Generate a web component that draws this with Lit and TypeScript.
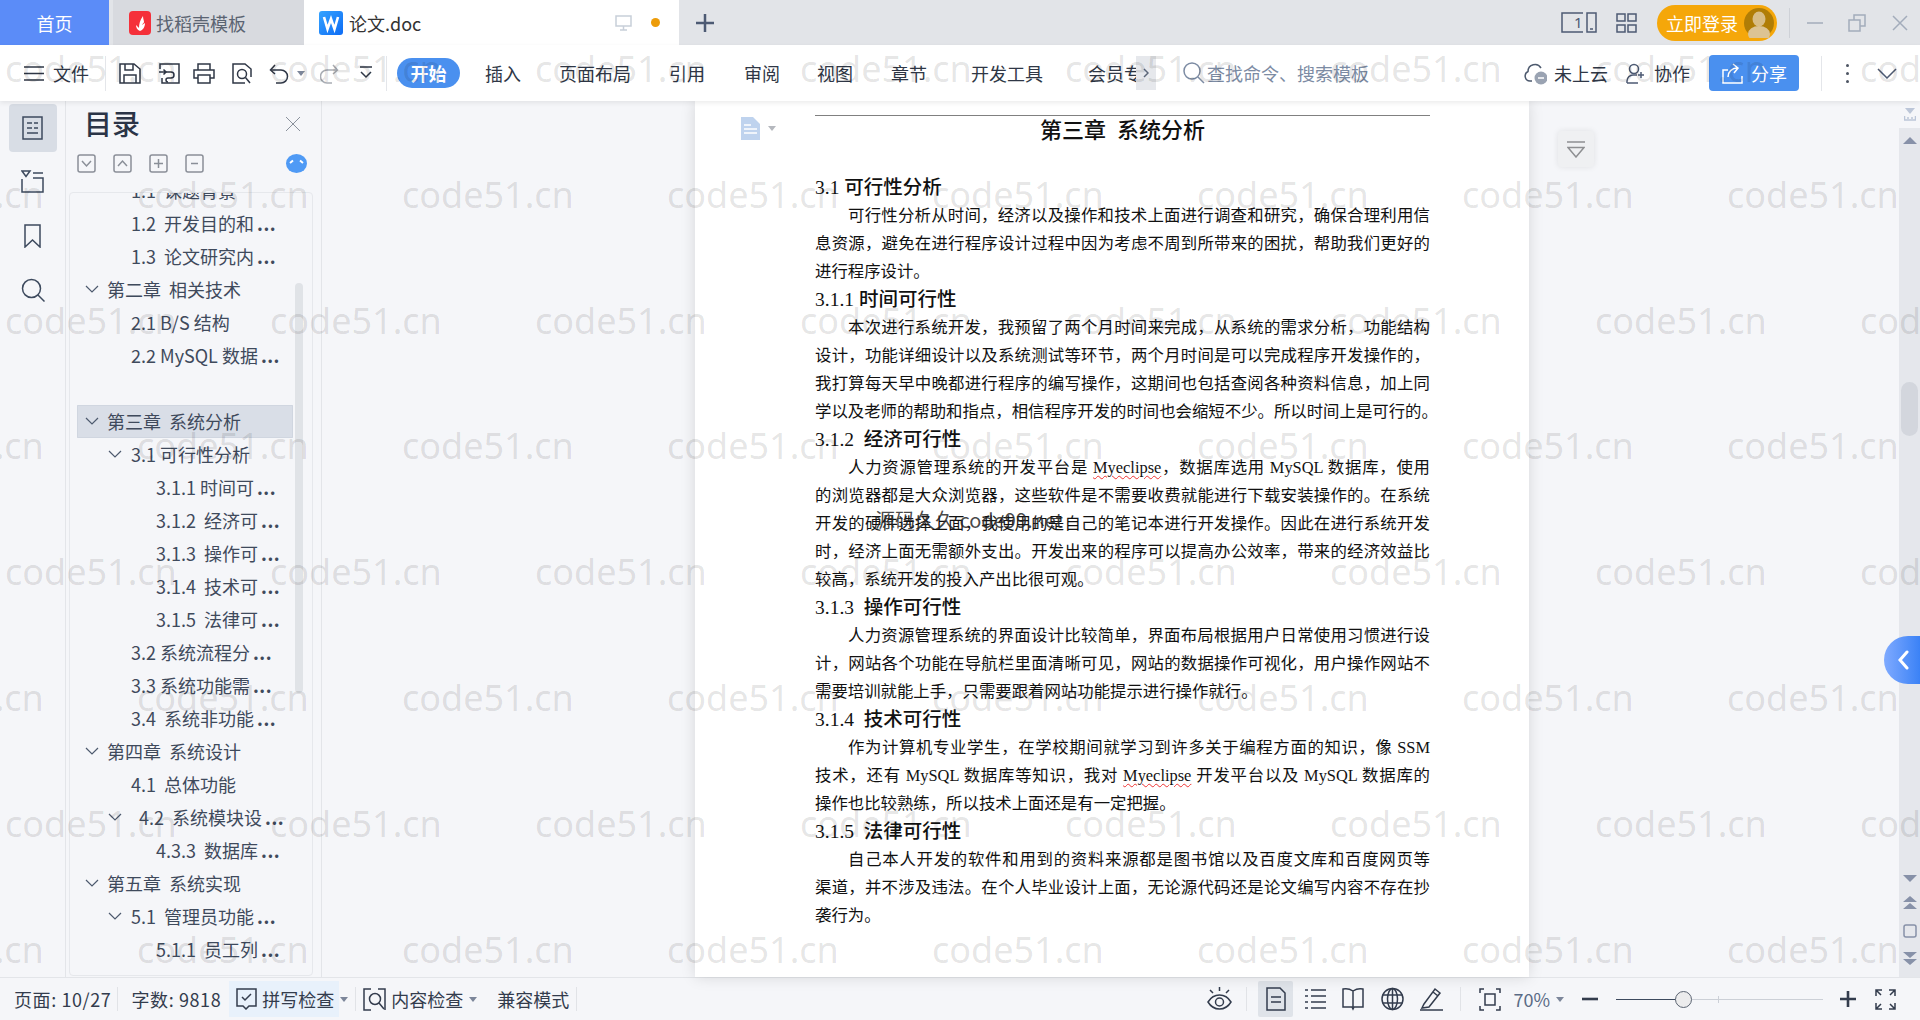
import { LitElement, html, css, svg, unsafeCSS, TemplateResult } from "lit";
import { customElement } from "lit/decorators.js";

const margins = Array.from({ length: 60 }, (_, i) => `.ml${i + 1}{margin-left:${i + 1}px}`).join("");

const ic = (w: number, h: number, cls: string, body: TemplateResult) =>
  html`<svg class="${cls}" width="${w}" height="${h}" viewBox="0 0 ${w} ${h}">${body}</svg>`;

const tri = (cls = "") => ic(8, 5, `tri ${cls}`, svg`<path d="M0 0h8L4 5z"/>`);

const chevron = ic(14, 8, "chev", svg`<path d="M1 1l6 6 6-6"/>`);

type Row = { t: string; lv: number; chev?: boolean; sel?: boolean; dots?: boolean; shift?: boolean };
const rows: Row[] = [
  { t: "1.1  课题背景", lv: 2 },
  { t: "1.2  开发目的和", lv: 2, dots: true },
  { t: "1.3  论文研究内", lv: 2, dots: true },
  { t: "第二章  相关技术", lv: 1, chev: true },
  { t: "2.1 B/S 结构", lv: 2 },
  { t: "2.2 MySQL 数据", lv: 2, dots: true },
  { t: "", lv: 2 },
  { t: "第三章  系统分析", lv: 1, chev: true, sel: true },
  { t: "3.1 可行性分析", lv: 2, chev: true },
  { t: "3.1.1 时间可", lv: 3, dots: true },
  { t: "3.1.2  经济可", lv: 3, dots: true },
  { t: "3.1.3  操作可", lv: 3, dots: true },
  { t: "3.1.4  技术可", lv: 3, dots: true },
  { t: "3.1.5  法律可", lv: 3, dots: true },
  { t: "3.2 系统流程分", lv: 2, dots: true },
  { t: "3.3 系统功能需", lv: 2, dots: true },
  { t: "3.4  系统非功能", lv: 2, dots: true },
  { t: "第四章  系统设计", lv: 1, chev: true },
  { t: "4.1  总体功能", lv: 2 },
  { t: "4.2  系统模块设", lv: 2, chev: true, dots: true, shift: true },
  { t: "4.3.3  数据库", lv: 3, dots: true },
  { t: "第五章  系统实现", lv: 1, chev: true },
  { t: "5.1  管理员功能", lv: 2, chev: true, dots: true },
  { t: "5.1.1  员工列", lv: 3, dots: true },
];

const tabs = [
  ["插入", "ml25"],
  ["页面布局", "ml38"],
  ["引用", "ml38"],
  ["审阅", "ml39"],
  ["视图", "ml37"],
  ["章节", "ml38"],
  ["开发工具", "ml44"],
];

const my = html`<span class="wavy">Myeclipse</span>`;
type Line = { k: "h" | "j" | "ji" | "e"; c: unknown };
const lines: Line[] = [
  { k: "h", c: "3.1 可行性分析" },
  { k: "ji", c: "可行性分析从时间，经济以及操作和技术上面进行调查和研究，确保合理利用信" },
  { k: "j", c: "息资源，避免在进行程序设计过程中因为考虑不周到所带来的困扰，帮助我们更好的" },
  { k: "e", c: "进行程序设计。" },
  { k: "h", c: "3.1.1 时间可行性" },
  { k: "ji", c: "本次进行系统开发，我预留了两个月时间来完成，从系统的需求分析，功能结构" },
  { k: "j", c: "设计，功能详细设计以及系统测试等环节，两个月时间是可以完成程序开发操作的，" },
  { k: "j", c: "我打算每天早中晚都进行程序的编写操作，这期间也包括查阅各种资料信息，加上同" },
  { k: "j", c: "学以及老师的帮助和指点，相信程序开发的时间也会缩短不少。所以时间上是可行的。" },
  { k: "h", c: "3.1.2  经济可行性" },
  { k: "ji", c: html`人力资源管理系统的开发平台是 ${my}，数据库选用 MySQL 数据库，使用` },
  { k: "j", c: "的浏览器都是大众浏览器，这些软件是不需要收费就能进行下载安装操作的。在系统" },
  { k: "j", c: "开发的硬件选择上面，我使用的是自己的笔记本进行开发操作。因此在进行系统开发" },
  { k: "j", c: "时，经济上面无需额外支出。开发出来的程序可以提高办公效率，带来的经济效益比" },
  { k: "e", c: "较高，系统开发的投入产出比很可观。" },
  { k: "h", c: "3.1.3  操作可行性" },
  { k: "ji", c: "人力资源管理系统的界面设计比较简单，界面布局根据用户日常使用习惯进行设" },
  { k: "j", c: "计，网站各个功能在导航栏里面清晰可见，网站的数据操作可视化，用户操作网站不" },
  { k: "e", c: "需要培训就能上手，只需要跟着网站功能提示进行操作就行。" },
  { k: "h", c: "3.1.4  技术可行性" },
  { k: "ji", c: "作为计算机专业学生，在学校期间就学习到许多关于编程方面的知识，像 SSM" },
  { k: "j", c: html`技术，还有 MySQL 数据库等知识，我对 ${my} 开发平台以及 MySQL 数据库的` },
  { k: "e", c: "操作也比较熟练，所以技术上面还是有一定把握。" },
  { k: "h", c: "3.1.5  法律可行性" },
  { k: "ji", c: "自己本人开发的软件和用到的资料来源都是图书馆以及百度文库和百度网页等" },
  { k: "j", c: "渠道，并不涉及违法。在个人毕业设计上面，无论源代码还是论文编写内容不存在抄" },
  { k: "e", c: "袭行为。" },
];

const WM_ROWS = [0, 1, 2, 3, 4, 5, 6, 7];
const WM_COLS = [-1, 0, 1, 2, 3, 4, 5, 6, 7];

@customElement("app-root")
export class AppRoot extends LitElement {
  static styles = css`
    ${unsafeCSS(margins)}
    :host {
      display: block;
      position: relative;
      width: 1920px;
      height: 1020px;
      overflow: hidden;
      font-family: "Noto Sans CJK SC", "Noto Sans", sans-serif;
      font-size: 18px;
      color: #2f3746;
      background: #f5f6f9;
    }
    svg { display: block; flex: none; fill: none; stroke: currentColor; stroke-width: 1.5; }
    svg.tri { fill: currentColor; stroke: none; color: #7c869a; }
    .app { display: flex; flex-direction: column; height: 1020px; }
    .t { white-space: pre; line-height: 24px; flex: none; }

    /* Tab strip */
    .tabbar { display: flex; align-items: center; height: 45px; background: #e2e4e8; flex: none; }
    .tab { display: flex; align-items: center; height: 45px; flex: none; }
    .home { width: 109px; justify-content: center; background: #5b8cf8; color: #fff; }
    .tmpl { width: 191px; margin-left: 4px; padding-left: 16px; box-sizing: border-box; background: #d8dadf; color: #5b6472; }
    .doc { width: 375px; padding-left: 15px; box-sizing: border-box; background: #fff; color: #333; }
    .mon { color: #c8cfd9; margin-left: 194px; }
    .dot { width: 9px; height: 9px; border-radius: 50%; background: #ed9c0a; margin-left: 19px; flex: none; }
    .plus { color: #4d5a73; stroke-width: 2.5; margin-left: 17px; }
    .spacer { flex: 1; }
    .slate { color: #4d5a73; }
    .login { display: flex; align-items: center; width: 120px; height: 36px; margin-left: 20px; border-radius: 18px; background: #f5a70a; color: #fff; box-sizing: border-box; padding-left: 9px; flex: none; }
    .vr { width: 1px; background: #ced1d7; flex: none; }
    .vr.tall { height: 30px; }
    .vr.tool { height: 35px; background: #e4e6ea; }
    .vr.stat { height: 24px; background: #e1e3e7; }
    .wc { color: #a3acbb; }

    /* Ribbon */
    .toolbar { display: flex; align-items: center; height: 56px; padding: 0 23px 0 24px; background: #fff; box-shadow: 0 2px 5px rgba(0, 0, 0, .08); position: relative; z-index: 2; flex: none; }
    .gray { color: #a9adb4; }
    .pill { width: 63px; height: 30px; line-height: 30px; text-align: center; border-radius: 15px; background: #4a90ef; color: #fff; font-weight: 700; flex: none; }
    .clip { width: 48px; overflow: hidden; flex: none; }
    .more { width: 20px; height: 34px; background: #e6e8ec; display: flex; align-items: center; justify-content: center; flex: none; }
    .more svg { color: #5c6678; }
    .sicon { color: #7c8ba3; }
    .search { color: #7c8ba3; }
    .share { display: flex; align-items: center; width: 90px; height: 36px; border-radius: 4px; background: #4a90ef; color: #fff; flex: none; padding-left: 13px; box-sizing: border-box; }
    .kebab { display: flex; flex-direction: column; gap: 5px; flex: none; }
    .kebab i { display: block; width: 3px; height: 3px; background: #4d5563; border-radius: 50%; }

    /* Body */
    .main { display: flex; flex: 1; min-height: 0; position: relative; }
    .rail { width: 66px; border-right: 1px solid #e3e5e9; box-sizing: border-box; display: flex; flex-direction: column; align-items: center; padding-top: 3px; color: #3d4a5e; flex: none; }
    .rail-on { width: 48px; height: 48px; border-radius: 4px; background: #d8dde5; display: flex; align-items: center; justify-content: center; }
    .r2 { margin-top: 18px; }
    .r3 { margin-top: 31px; }
    .r4 { margin-top: 30px; }
    .panel { width: 256px; border-right: 1px solid #e3e5e9; box-sizing: border-box; display: flex; flex-direction: column; flex: none; }
    .phead { display: flex; align-items: center; height: 44px; padding-left: 18px; flex: none; }
    .ptitle { font-size: 28px; line-height: 40px; font-weight: 500; color: #2b3447; }
    .pclose { color: #8a919c; stroke-width: 1; margin-left: auto; margin-right: 21px; margin-top: 2px; }
    .pbtns { display: flex; align-items: center; height: 19px; margin-top: 9px; padding-left: 11px; gap: 17px; flex: none; color: #8a8f98; }
    .pbtns .face { margin-left: 65px; }
    .tree { position: relative; margin: 19px 0 1px 3px; width: 244px; flex: 1; min-height: 0; box-sizing: border-box; border: 1px solid #e6e8ec; border-radius: 4px; overflow: hidden; color: #3f4a5c; }
    .rows { margin-top: -19.4px; }
    .row { display: flex; align-items: center; height: 33px; box-sizing: border-box; }
    .row .chev { color: #4d5a6e; stroke-width: 1.2; flex: none; }
    .lv1 { padding-left: 15px; }
    .lv1 .chev { margin-right: 8px; }
    .lv2 { padding-left: 61px; }
    .lv2.wc2 { padding-left: 38px; }
    .lv2.wc2 .chev { margin-right: 9px; }
    .lv2.shift .chev { margin-right: 17px; }
    .lv3 { padding-left: 86px; }
    .row.sel { background: #d9dee7; box-shadow: inset 0 0 0 1px #d0d6e0; width: 216px; margin-left: 7px; padding-left: 0; border-radius: 1px; }
    .row.sel .chev { margin-left: 8px; }
    .dots { font-weight: 700; margin-left: 3px; letter-spacing: .5px; }
    .pscroll { position: absolute; left: 225px; top: 90px; width: 8px; height: 410px; border-radius: 4px; background: #e0e3e7; }

    /* Workspace */
    .work { position: relative; flex: 1; min-width: 0; }
    .page { position: relative; margin-left: 373px; width: 834px; height: 100%; box-sizing: border-box; padding: 14px 99px 0 120px; background: #fff; box-shadow: 0 0 14px rgba(0, 0, 0, .13); color: #111; font-family: "Liberation Serif", "Noto Sans CJK SC", serif; }
    .rule { height: 1px; background: #808080; }
    .title { height: 30px; line-height: 30px; text-align: center; font-size: 22px; font-weight: 500; white-space: pre; margin-bottom: 28px; }
    .ln { height: 28px; line-height: 28px; white-space: nowrap; font-size: 16.4px; }
    .ln.h { font-size: 19.5px; font-weight: 500; white-space: pre; }
    .ln.j, .ln.ji { text-align: justify; text-align-last: justify; }
    .ln.ji { padding-left: 33px; }
    .wavy { text-decoration: underline wavy #e33 1px; text-underline-offset: 2px; }
    .pageic { position: absolute; left: 46px; top: 16px; display: flex; align-items: center; gap: 8px; }
    .pageic .tri { color: #b5b8be; }
    .stamp { position: absolute; left: 180px; top: 406px; font-size: 20px; line-height: 26px; color: rgba(40, 40, 40, .85); white-space: pre; font-family: "Noto Sans CJK SC", sans-serif; }
    .filter { position: absolute; left: 1236px; top: 30px; width: 36px; height: 36px; border-radius: 4px; background: #eff0f2; box-shadow: 0 0 6px rgba(0, 0, 0, .09); display: flex; align-items: center; justify-content: center; color: #8e8f92; }
    .vscroll { width: 21px; display: flex; flex-direction: column; align-items: center; flex: none; }
    .vtop { height: 27px; display: flex; align-items: center; justify-content: center; color: #bcc6d8; flex: none; }
    .track { flex: 1; width: 100%; background: #e5e7ec; display: flex; flex-direction: column; align-items: center; color: #8791a8; padding: 9px 0 11px; box-sizing: border-box; }
    .track svg.tri { color: #8791a8; }
    .thumb { width: 17px; height: 54px; border-radius: 9px; background: #d3d6dd; margin-top: 238px; }
    .vbtns { margin-top: auto; display: flex; flex-direction: column; align-items: center; gap: 14px; }
    .blue { position: absolute; right: 0; top: 535px; width: 36px; height: 48px; border-radius: 24px 0 0 24px; background: linear-gradient(90deg, #7faaff, #3b82f6); display: flex; align-items: center; justify-content: center; color: #fff; padding-left: 2px; box-sizing: border-box; }

    /* Status bar */
    .status { display: flex; align-items: center; height: 43px; border-top: 1px solid #e3e5e9; box-sizing: border-box; padding-left: 14px; flex: none; background: #f5f6f9; color: #333c4d; }
    .num { letter-spacing: .6px; }
    .spell { display: flex; align-items: center; width: 110px; height: 36px; padding-left: 7px; box-sizing: border-box; background: #e8f1fb; flex: none; }
    .pageview { display: flex; align-items: center; justify-content: center; width: 35px; height: 36px; background: #dfe3e9; border-radius: 2px; flex: none; }
    .zoomv { color: #5a6b85; }
    .slider { position: relative; width: 207px; height: 1px; background: #ccd0d7; flex: none; }
    .slider .fill { position: absolute; left: 0; top: 0; width: 60px; height: 1px; background: #3d4a5e; }
    .slider .tick { position: absolute; left: 102px; top: -3px; width: 1px; height: 7px; background: #ccd0d7; }
    .slider .knob { position: absolute; left: 59px; top: -8px; width: 17px; height: 17px; border-radius: 50%; border: 1.5px solid #5b6472; background: #ececed; box-sizing: border-box; }
    .thick { stroke-width: 2.6; }

    /* Watermark */
    .wm { position: absolute; inset: 0; overflow: hidden; pointer-events: none; z-index: 5; }
    .wm span { position: absolute; font-family: "Noto Sans", sans-serif; font-size: 36px; line-height: 50px; color: rgba(0, 0, 0, .115); white-space: pre; }
  `;

  private renderRow(r: Row) {
    const cls = [`row`, `lv${r.lv}`, r.chev ? "wc2" : "", r.sel ? "sel" : "", r.shift ? "shift" : ""].join(" ");
    return html`<div class="${cls}">
      ${r.chev ? chevron : ""}
      <span class="t">${r.t}</span>${r.dots ? html`<span class="dots">...</span>` : ""}
    </div>`;
  }

  render() {
    return html`<div class="app">
      <header class="tabbar">
        <div class="tab home">首页</div>
        <div class="tab tmpl">
          ${ic(22, 24, "", svg`<rect width="22" height="24" rx="4" fill="#f5303a" stroke="none"/><path d="M11 20c-3-1-4-4-4-6 1 1 2 2 3 3 0-4 1-8 4-12 0 3 1 4 1 6 0 1-1 1-2 3l3-2c0 4-2 7-5 8z" fill="#fff" stroke="none"/>`)}
          <span class="t ml5">找稻壳模板</span>
        </div>
        <div class="tab doc">
          ${ic(24, 24, "", svg`<defs><linearGradient id="w" x1="0" y1="0" x2="1" y2="1"><stop offset="0" stop-color="#36a4ff"/><stop offset="1" stop-color="#0d6cf5"/></linearGradient></defs><rect width="24" height="24" rx="3" fill="url(#w)" stroke="none"/><path d="M5 6l3.5 12L12 8l3.5 10L19 6" stroke="#fff" stroke-width="2.6"/>`)}
          <span class="t ml6">论文.doc</span>
          ${ic(17, 16, "mon", svg`<path d="M1 1h15v10H1zM8.5 11v4M5 15h7"/>`)}
          <span class="dot"></span>
        </div>
        ${ic(18, 18, "plus", svg`<path d="M9 0v18M0 9h18"/>`)}
        <div class="spacer"></div>
        ${ic(36, 21, "slate", svg`<path d="M22 1H1v19h21"/><rect x="26" y="1" width="9" height="19"/><path d="M29 17h3"/><text x="13" y="16" font-size="15" fill="currentColor" stroke="none" font-family="Noto Sans, sans-serif">1</text>`)}
        ${ic(21, 20, "slate ml19", svg`<rect x="1" y="1" width="8" height="7"/><rect x="12" y="1" width="8" height="7"/><rect x="1" y="12" width="8" height="7"/><rect x="12" y="12" width="8" height="7"/>`)}
        <div class="login">
          <span class="t">立即登录</span>
          ${ic(30, 30, "ml6", svg`<circle cx="15" cy="15" r="15" fill="#b07d06" stroke="none"/><ellipse cx="15" cy="11" rx="6.5" ry="7.5" fill="#d8bd86" stroke="none"/><ellipse cx="15" cy="26" rx="11" ry="8" fill="#dcc393" stroke="none"/>`)}
        </div>
        <div class="vr tall ml12"></div>
        ${ic(16, 2, "wc ml17", svg`<path d="M0 1h16"/>`)}
        ${ic(18, 18, "wc ml25", svg`<path d="M1 6h11v11H1zM6 6V1h11v11h-5"/>`)}
        ${ic(16, 16, "wc ml26", svg`<path d="M1 1l14 14M15 1L1 15"/>`)}
        <div class="ml12"></div>
      </header>

      <nav class="toolbar">
        ${ic(20, 15, "", svg`<path d="M0 1h20M0 7.5h20M0 14h20"/>`)}
        <span class="t ml9">文件</span>
        <div class="vr tool ml16"></div>
        ${ic(22, 21, "ml13", svg`<path d="M1 1h14l6 5v14H1z"/><path d="M6 1v6h8V1"/><path d="M5 20v-8h12v8"/>`)}
        ${ic(21, 21, "ml18", svg`<path d="M1 6V1h19v19H3v-5"/><path d="M0 9h7M4.5 6.5L7 9l-2.5 2.5"/><path d="M7 9h5a3 3 0 0 1 0 6h-3a2 2 0 0 0 0 4"/>`)}
        ${ic(22, 21, "ml13", svg`<path d="M5 7V1h12v6"/><path d="M5 15H1V7h20v8h-4"/><path d="M5 12h12v8H5z"/>`)}
        ${ic(20, 21, "ml17", svg`<path d="M13 20H1V1h12l6 5v8"/><circle cx="10" cy="11" r="4.5"/><path d="M13.5 14.5L18 20"/>`)}
        ${ic(20, 21, "ml17", svg`<path d="M6 2L1.5 7 6 11"/><path d="M2 7h10a6.5 6.5 0 0 1 0 13H7"/>`)}
        ${tri("ml8")}
        ${ic(19, 21, "ml15 gray", svg`<path d="M13 2l4.5 5L13 11"/><path d="M17 7H7a6.5 6.5 0 0 0 0 13h5"/>`)}
        ${ic(14, 14, "ml20", svg`<path d="M1 1h12M2 6l5 5 5-5"/>`)}
        <div class="vr tool ml13"></div>
        <div class="pill ml10">开始</div>
        ${tabs.map(([t, m]) => html`<span class="t ${m}">${t}</span>`)}
        <span class="t clip ml45">会员专享</span>
        <div class="more">${ic(6, 10, "", svg`<path d="M1 1l4 4-4 4"/>`)}</div>
        ${ic(22, 22, "sicon ml27", svg`<circle cx="9" cy="9" r="8"/><path d="M15 15l6 6"/>`)}
        <span class="t search ml2">查找命令、搜索模板</span>
        <div class="spacer"></div>
        ${ic(23, 24, "slate", svg`<path d="M8 20H6A5 5 0 0 1 4 10.500 7 7 0 0 1 17 7" stroke="#4d5a6e"/><circle cx="17" cy="17" r="6.500" fill="#9aa3b2" stroke="none"/><path d="M14 17h6" stroke="#fff"/>`)}
        <span class="t ml7">未上云</span>
        ${ic(19, 21, "slate ml18", svg`<circle cx="8" cy="6" r="4.500"/><path d="M1 20v-2a6 6 0 0 1 6-6h4M1 20h11M15 9v6M12 12h6"/>`)}
        <span class="t ml9">协作</span>
        <div class="share ml19">
          ${ic(21, 21, "", svg`<path d="M6 7H1v13h19v-7"/><path d="M6 14c0-5 4-9 9-9M11 1l5 4-4 5"/>`)}
          <span class="t ml8">分享</span>
        </div>
        <div class="vr tool ml22"></div>
        <div class="kebab ml24"><i></i><i></i><i></i></div>
        ${ic(20, 11, "slate ml28", svg`<path d="M1 1l9 9 9-9"/>`)}
      </nav>

      <div class="main">
        <aside class="rail">
          <div class="rail-on">
            ${ic(21, 24, "", svg`<path d="M1 1h19v22H1zM5 7h5M12 7h4M5 12h5M12 12h4M5 17h11"/>`)}
          </div>
          ${ic(23, 23, "r2", svg`<path d="M1 1h8L5 6.500zM12 3h10M1 9v13h21V8H12"/>`)}
          ${ic(17, 24, "r3", svg`<path d="M1 1h15v22l-7.500-7L1 23z"/>`)}
          ${ic(24, 24, "r4", svg`<circle cx="10.500" cy="10.500" r="9"/><path d="M17 17l6.500 6.500"/>`)}
        </aside>

        <section class="panel">
          <div class="phead">
            <span class="ptitle">目录</span>
            ${ic(14, 14, "pclose", svg`<path d="M0 0l14 14M14 0L0 14"/>`)}
          </div>
          <div class="pbtns">
            ${ic(19, 19, "", svg`<rect x="1" y="1" width="17" height="17" rx="2"/><path d="M5 7l4.500 5L14 7"/>`)}
            ${ic(19, 19, "", svg`<rect x="1" y="1" width="17" height="17" rx="2"/><path d="M5 12l4.500-5 4.500 5"/>`)}
            ${ic(19, 19, "", svg`<rect x="1" y="1" width="17" height="17" rx="2"/><path d="M5 9.500h9M9.500 5v9"/>`)}
            ${ic(19, 19, "", svg`<rect x="1" y="1" width="17" height="17" rx="2"/><path d="M6 9.500h7"/>`)}
            ${ic(21, 19, "face", svg`<ellipse cx="10.500" cy="9.500" rx="10.500" ry="9.500" fill="#4f9af5" stroke="none"/><path d="M4 9l3-2.500M17 9l-3-2.500" stroke="#fff" stroke-width="2"/>`)}
          </div>
          <div class="tree">
            <div class="rows">${rows.map((r) => this.renderRow(r))}</div>
            <div class="pscroll"></div>
          </div>
        </section>

        <section class="work">
          <article class="page">
            <div class="pageic">
              ${ic(19, 23, "", svg`<path d="M0 0h12l7 7v16H0z" fill="#bfd3ee" stroke="none"/><path d="M3 8h7M3 12h13M3 16h13" stroke="#fff"/>`)}
              ${tri()}
            </div>
            <div class="rule"></div>
            <div class="title">第三章  系统分析</div>
            ${lines.map((l) => html`<div class="ln ${l.k}">${l.c}</div>`)}
            <div class="stamp">源码久久 code99.net</div>
          </article>
          <div class="filter">
            ${ic(18, 17, "", svg`<path d="M0 1h18M1 6.500h16L9 16z"/>`)}
          </div>
        </section>

        <div class="vscroll">
          <div class="vtop">${ic(12, 13, "", svg`<path d="M1 0h10L6 6z" fill="currentColor" stroke="none"/><path d="M0.500 8v4h11V8M4 9v2M8 9v2"/>`)}</div>
          <div class="track">
            ${ic(14, 7, "tri", svg`<path d="M7 0l7 7H0z"/>`)}
            <div class="thumb"></div>
            <div class="vbtns">
              ${ic(14, 7, "tri", svg`<path d="M0 0h14L7 7z"/>`)}
              ${ic(14, 14, "tri", svg`<path d="M7 0l7 6H0zM7 7l7 6H0z"/>`)}
              ${ic(14, 14, "", svg`<rect x="1" y="1" width="12" height="12" rx="2"/>`)}
              ${ic(14, 14, "tri", svg`<path d="M0 0h14L7 6zM0 7h14l-7 6z"/>`)}
            </div>
          </div>
        </div>
        <div class="blue">${ic(12, 20, "", svg`<path d="M10 2L3 10l7 8" stroke-width="3" stroke-linecap="round"/>`)}</div>
      </div>

      <footer class="status">
        <span class="t num">页面: 10/27</span>
        <div class="vr stat ml6"></div>
        <span class="t num ml13">字数: 9818</span>
        <div class="ml8"></div>
        <div class="spell">
          ${ic(21, 22, "", svg`<path d="M1 1h19v17h-7l-3 3-3-3H1z"/><path d="M6 9l3 3 6-6"/>`)}
          <span class="t ml5">拼写检查</span>
        </div>
        ${tri("ml1")}
        <div class="vr stat ml7"></div>
        ${ic(23, 23, "ml7", svg`<path d="M8 1H1v21h7M15 1h7v21"/><circle cx="12" cy="11" r="5.500"/><path d="M16 15l5 6"/>`)}
        <span class="t ml5">内容检查</span>
        ${tri("ml6")}
        <span class="t ml20">兼容模式</span>
        <div class="vr stat ml7"></div>
        <div class="spacer"></div>
        ${ic(25, 24, "", svg`<path d="M1 15c3-5 7-7 11.500-7S21 10 24 15c-3 5-7 7-11.500 7S4 20 1 15z"/><circle cx="12.500" cy="15" r="4"/><path d="M12.500 0v4M3 3l3 3M22 3l-3 3"/>`)}
        <div class="vr stat ml14"></div>
        <div class="pageview ml11">${ic(20, 24, "", svg`<path d="M1 1h13l5 5v17H1zM5 10h10M5 15h10"/>`)}</div>
        ${ic(21, 22, "ml12", svg`<path d="M6 2h15M6 8h15M6 14h15M6 20h15M0 2h3M0 8h3M0 14h3M0 20h3"/>`)}
        ${ic(22, 24, "ml16", svg`<path d="M1 2c4-1 7 0 10 2 3-2 6-3 10-2v18H12l-1 2-1-2H1zM11 4v16"/>`)}
        ${ic(23, 24, "ml17", svg`<circle cx="11.500" cy="12" r="10.500"/><ellipse cx="11.500" cy="12" rx="5" ry="10.500"/><path d="M11.500 1.500v21M1.500 8h20M1.500 16h20"/>`)}
        ${ic(23, 24, "ml16", svg`<path d="M4 17L15 2l5 4L9 20l-7 1zM0 23h23M13 5l5 4"/>`)}
        <div class="vr stat ml17"></div>
        ${ic(22, 23, "ml18", svg`<path d="M1 5V1h4M17 1h4v4M21 18v4h-4M5 22H1v-4"/><rect x="6" y="6" width="10" height="11"/>`)}
        <span class="t zoomv ml12">70%</span>
        ${tri("ml6")}
        ${ic(16, 4, "thick ml18", svg`<path d="M0 2h16"/>`)}
        <div class="slider ml18"><div class="fill"></div><div class="tick"></div><div class="knob"></div></div>
        ${ic(16, 16, "thick ml17", svg`<path d="M0 8h16M8 0v16"/>`)}
        ${ic(21, 21, "ml19", svg`<path d="M1 7V1h6M1 1l5 5M20 7V1h-6M20 1l-5 5M1 14v6h6M1 20l5-5M20 14v6h-6M20 20l-5-5"/>`)}
        <div class="ml24"></div>
      </footer>
    </div>
    <div class="wm">
      ${WM_ROWS.map((r) =>
        WM_COLS.map((c) => {
          const x = (r % 2 ? 137 : 5) + c * 265;
          const y = 44 + r * 125.8;
          return html`<span style="left:${x}px;top:${y}px">code51.cn</span>`;
        })
      )}
    </div>`;
  }
}
